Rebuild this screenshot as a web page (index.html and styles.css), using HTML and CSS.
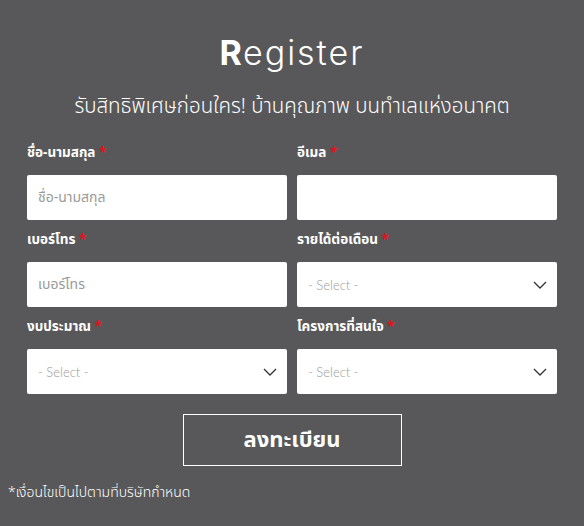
FILE: index.html
```html
<!DOCTYPE html>
<html lang="th">
<head>
<meta charset="UTF-8">
<meta name="viewport" content="width=device-width, initial-scale=1.0">
<title>Register</title>
<link rel="stylesheet" href="styles.css">
</head>
<body>
    <div class="register">
        <h1 class="title"><b>R</b>egister</h1>
        <p class="subtitle">รับสิทธิพิเศษก่อนใคร! บ้านคุณภาพ บนทำเลแห่งอนาคต</p>

        <form class="form">
            <div class="field">
                <label>ชื่อ-นามสกุล <span class="req">*</span></label>
                <input type="text" placeholder="ชื่อ-นามสกุล">
            </div>
            <div class="field">
                <label>อีเมล <span class="req">*</span></label>
                <input type="email">
            </div>
            <div class="field">
                <label>เบอร์โทร <span class="req">*</span></label>
                <input type="text" placeholder="เบอร์โทร">
            </div>
            <div class="field">
                <label>รายได้ต่อเดือน <span class="req">*</span></label>
                <div class="select">
                    <span>- Select -</span>
                    <svg width="14" height="8" viewBox="0 0 14 8"><path d="M1 1l6 6 6-6" fill="none" stroke="#333" stroke-width="1.3"/></svg>
                </div>
            </div>
            <div class="field">
                <label>งบประมาณ <span class="req">*</span></label>
                <div class="select">
                    <span>- Select -</span>
                    <svg width="14" height="8" viewBox="0 0 14 8"><path d="M1 1l6 6 6-6" fill="none" stroke="#333" stroke-width="1.3"/></svg>
                </div>
            </div>
            <div class="field">
                <label>โครงการที่สนใจ <span class="req">*</span></label>
                <div class="select">
                    <span>- Select -</span>
                    <svg width="14" height="8" viewBox="0 0 14 8"><path d="M1 1l6 6 6-6" fill="none" stroke="#333" stroke-width="1.3"/></svg>
                </div>
            </div>
        </form>

        <div class="actions">
            <button type="button">ลงทะเบียน</button>
        </div>
        <p class="note">*เงื่อนไขเป็นไปตามที่บริษัทกำหนด</p>
    </div>
</body>
</html>
```

FILE: styles.css
```css
body{
  margin: 0;
  background-color: #58585a;
  color: white;
  font-family: "Noto Sans Thai", "Noto Sans", "Lato", sans-serif;
}

.register{
  padding-top: 30px;
}

.title{
  margin: 0;
  text-align: center;
  font-family: "Inter", sans-serif;
  font-weight: 300;
  font-size: 34px;
  letter-spacing: 2px;
  line-height: 46px;
}

.title b{
  font-weight: 700;
  letter-spacing: 1px;
}

.subtitle{
  margin: 16px 0 0;
  text-align: center;
  font-size: 20.5px;
  line-height: 30px;
  font-weight: 300;
}

.form{
  display: grid;
  grid-template-columns: 1fr 1fr;
  column-gap: 10px;
  padding: 0 27px;
  margin-top: 21px;
}

.field{
  display: flex;
  flex-direction: column;
  margin-bottom: 10px;
}

.field label{
  font-size: 13.5px;
  font-weight: 700;
  line-height: 20px;
  margin-bottom: 12px;
}

.req{
  color: #e3131b;
}

.field input, .select{
  box-sizing: border-box;
  height: 45px;
  border: none;
  border-radius: 2px;
  background: white;
  padding: 0 11px;
  font-family: inherit;
  font-size: 14px;
  outline: none;
}

.field input::placeholder{
  color: #9a9a9a;
}

.select{
  display: flex;
  align-items: center;
  justify-content: space-between;
  color: #9a9a9a;
  font-family: "Lato", sans-serif;
  font-size: 13px;
  font-weight: 300;
  padding-right: 10px;
}

.actions{
  display: flex;
  justify-content: center;
  margin-top: 10px;
}

button{
  width: 219px;
  height: 52px;
  background: transparent;
  border: 1px solid white;
  color: white;
  font-family: inherit;
  font-size: 22px;
  font-weight: 700;
}

.note{
  margin: 16px 0 0 8px;
  font-size: 14px;
  font-weight: 300;
}
```
